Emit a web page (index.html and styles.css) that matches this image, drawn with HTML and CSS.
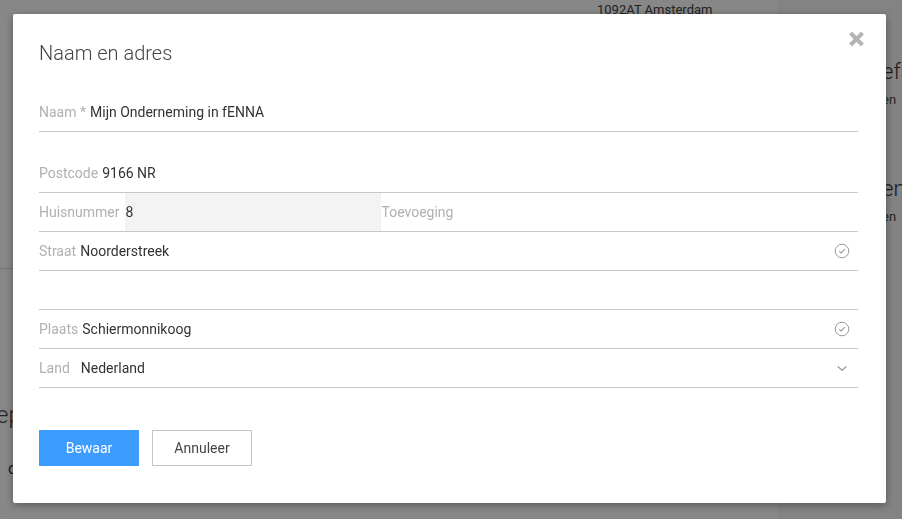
FILE: index.html
```html
<!DOCTYPE html>
<html lang="nl">
<head>
<meta charset="utf-8">
<title>Naam en adres</title>
<link rel="stylesheet" href="styles.css">
</head>
<body>
<div class="page">
  <main class="main">
    <div class="addr">1092AT Amsterdam</div>
    <div class="sep"></div>
    <h2 class="main-h">epublicatie</h2>
    <p class="main-p">c</p>
  </main>
  <aside class="side">
    <h3 class="side-h">efacturen</h3>
    <p class="side-p">en</p>
    <h3 class="side-h second">en</h3>
    <p class="side-p">en</p>
  </aside>
</div>
<div class="overlay">
  <div class="modal">
    <button class="close" aria-label="Sluiten">
      <svg width="17" height="16" viewBox="0 0 17 16"><path d="M2.5 2 L14.5 14 M14.5 2 L2.5 14" stroke="#b4b4b4" stroke-width="4" stroke-linecap="butt" fill="none"/></svg>
    </button>
    <h1 class="title">Naam en adres</h1>
    <div class="row">
      <span class="lbl">Naam *</span><span class="val">Mijn Onderneming in fENNA</span>
    </div>
    <div class="group">
      <div class="row">
        <span class="lbl">Postcode</span><span class="val">9166 NR</span>
      </div>
      <div class="row">
        <span class="lbl">Huisnummer</span><span class="input">8</span><span class="placeholder">Toevoeging</span>
      </div>
      <div class="row">
        <span class="lbl">Straat</span><span class="val grow">Noorderstreek</span>
        <svg class="icon" width="16" height="16" viewBox="0 0 16 16"><circle cx="8" cy="8" r="6.8" fill="none" stroke="#9a9a9a" stroke-width="1"/><path d="M5.2 8.1 L7.2 10 L10.9 6.2" fill="none" stroke="#9a9a9a" stroke-width="1.1"/></svg>
      </div>
      <div class="row"></div>
      <div class="row">
        <span class="lbl">Plaats</span><span class="val grow">Schiermonnikoog</span>
        <svg class="icon" width="16" height="16" viewBox="0 0 16 16"><circle cx="8" cy="8" r="6.8" fill="none" stroke="#9a9a9a" stroke-width="1"/><path d="M5.2 8.1 L7.2 10 L10.9 6.2" fill="none" stroke="#9a9a9a" stroke-width="1.1"/></svg>
      </div>
      <div class="row">
        <span class="lbl">Land</span><span class="val grow select">Nederland</span>
        <svg class="icon" width="16" height="16" viewBox="0 0 16 16"><path d="M3.6 6.4 L8 10.2 L12.4 6.4" fill="none" stroke="#8a8a8a" stroke-width="1.1"/></svg>
      </div>
    </div>
    <div class="actions">
      <button class="btn primary">Bewaar</button>
      <button class="btn">Annuleer</button>
    </div>
  </div>
</div>
</body>
</html>
```

FILE: styles.css
```css
html, body {
  margin: 0;
  padding: 0;
  height: 100%;
  overflow: hidden;
}
body {
  font-family: Roboto, "Liberation Sans", sans-serif;
  background: #ffffff;
  color: #333;
}
.page {
  display: grid;
  grid-template-columns: 778px 1fr;
  height: 519px;
}
.main {
  display: flex;
  flex-direction: column;
  overflow: hidden;
}
.addr {
  margin: 2px 0 0 597px;
  font-size: 13px;
  line-height: 16px;
  color: #444;
}
.sep {
  margin-top: 250px;
  border-top: 1px solid #d8d8d8;
}
.main-h {
  margin: 132px 0 0 -4px;
  font-size: 24px;
  font-weight: 300;
  line-height: 28px;
  color: #444;
}
.main-p {
  margin: 30px 0 0 8px;
  font-size: 16px;
  color: #333;
}
.side {
  background: #f7f7f7;
  padding: 58px 0 0 104px;
  overflow: hidden;
  white-space: nowrap;
}
.side-h {
  margin: 0;
  font-size: 22px;
  font-weight: 300;
  line-height: 28px;
  color: #333;
}
.side-h.second {
  margin-top: 65px;
}
.side-p {
  margin: 4px 0 0;
  font-size: 13px;
  line-height: 20px;
  color: #444;
}
.overlay {
  position: fixed;
  inset: 0;
  background: rgba(0, 0, 0, 0.47);
}
.modal {
  position: absolute;
  left: 13px;
  top: 14px;
  width: 819px;
  padding: 27px 28px 37px 26px;
  background: #fff;
  border-radius: 2px;
  box-shadow: 0 2px 8px rgba(0, 0, 0, 0.35);
}
.close {
  position: absolute;
  top: 17px;
  right: 21px;
  width: 17px;
  height: 16px;
  padding: 0;
  border: 0;
  background: none;
  display: flex;
}
.title {
  margin: 0 0 28px;
  font-size: 20px;
  font-weight: 300;
  line-height: 24px;
  color: #444;
}
.group {
  margin-top: 22px;
}
.row {
  display: flex;
  align-items: center;
  height: 38px;
  border-bottom: 1px solid #c8c8c8;
  font-size: 14px;
}
.lbl {
  color: #b0b0b0;
  margin-right: 4px;
}
.val {
  color: #333;
}
.grow {
  flex: 1;
}
.select {
  padding-left: 7px;
}
.input {
  align-self: stretch;
  width: 255px;
  padding-left: 1px;
  margin-left: 1px;
  background: #f3f3f3;
  display: flex;
  align-items: center;
  color: #333;
}
.placeholder {
  color: #b0b0b0;
  padding-left: 1px;
}
.icon {
  margin-right: 8px;
}
.actions {
  display: flex;
  gap: 13px;
  margin-top: 42px;
}
.btn {
  width: 100px;
  height: 36px;
  font-family: Roboto, "Liberation Sans", sans-serif;
  font-size: 14px;
  border: 1px solid #c6c6c6;
  background: #fff;
  color: #444;
  padding: 0;
}
.btn.primary {
  background: #3d9dff;
  border-color: #3d9dff;
  color: #fff;
}
```
